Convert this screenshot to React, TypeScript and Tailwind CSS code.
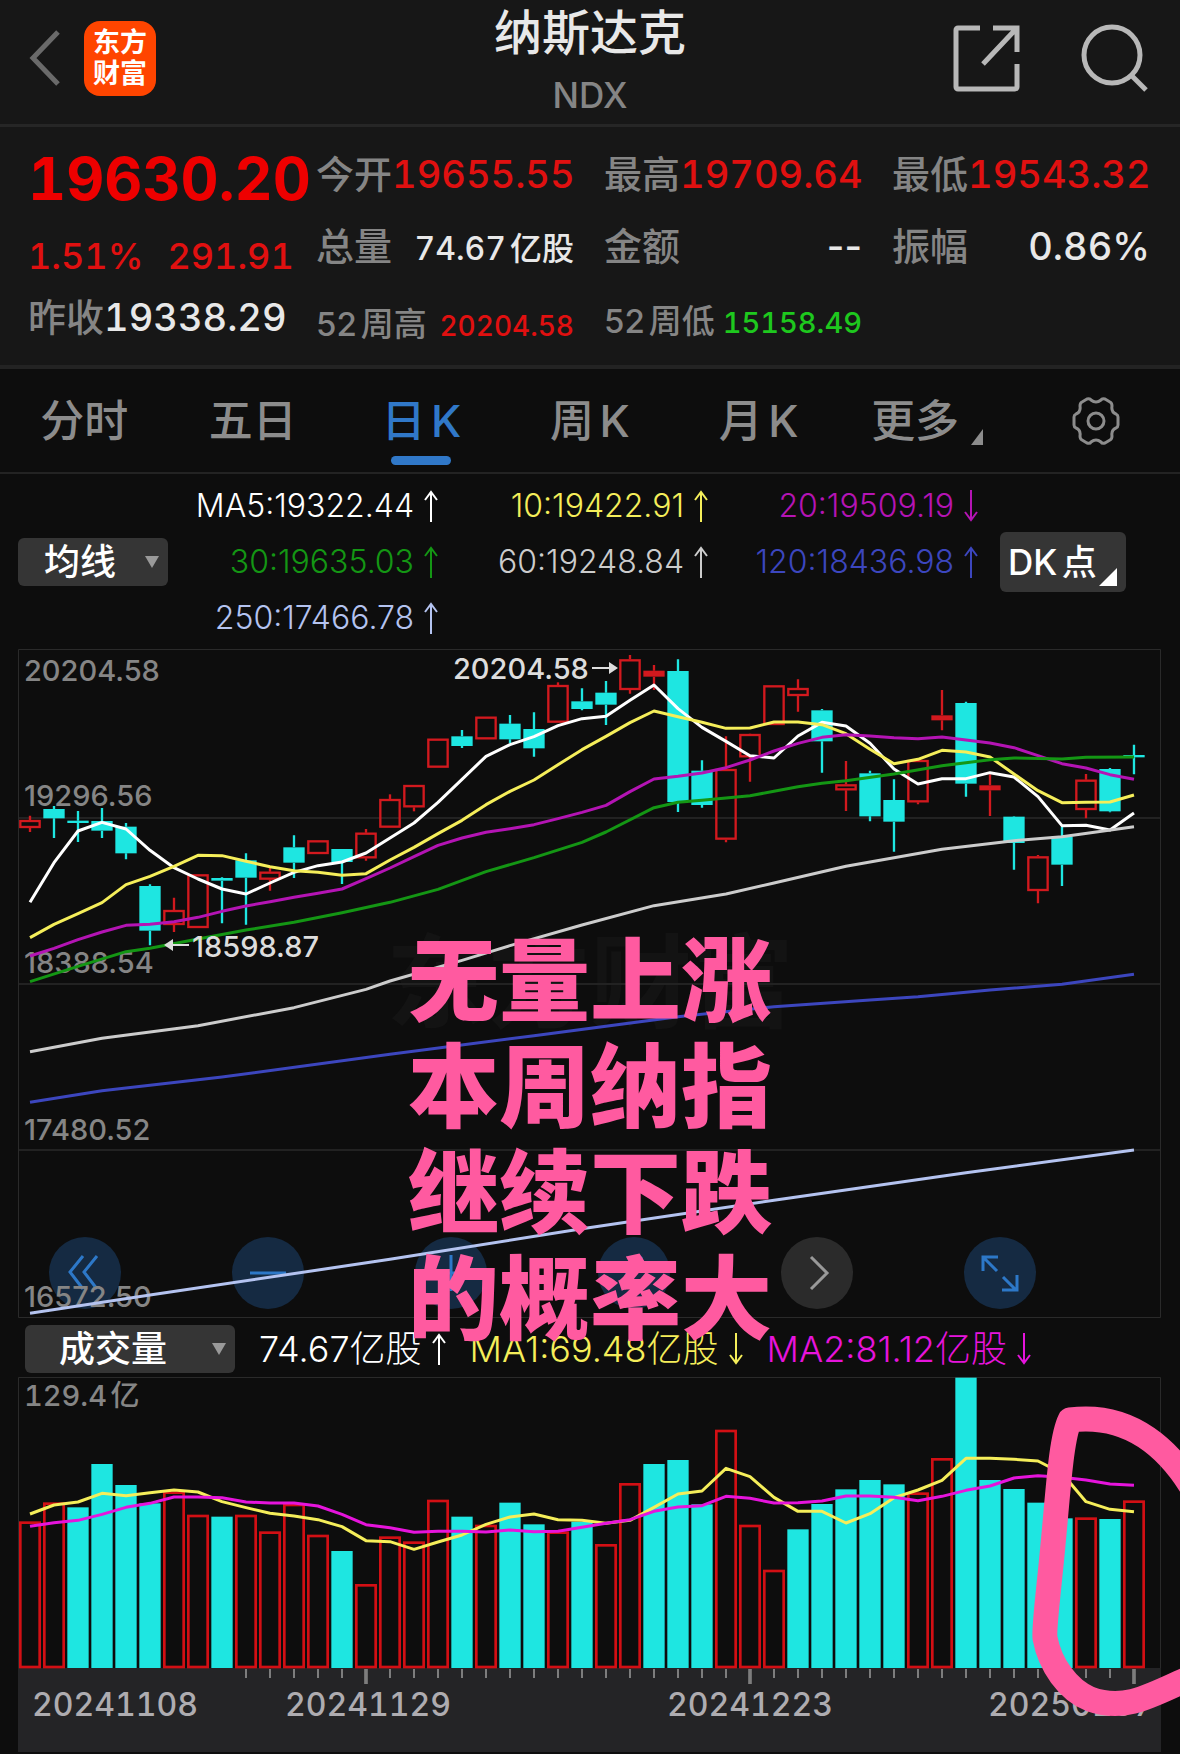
import React from "react"
import clsx from "clsx"

// Chart data is kept in thirds of a pixel, one entry per trading day
const PITCH = 72
const FIRST = 90

type Candle = [high: number, top: number, bottom: number, low: number, kind: "up" | "down" | "flat"]

const candles: Candle[] = [
    [527, 540, 564, 576, "up"], [498, 507, 535, 594, "down"], [513, 542, 549, 606, "down"], [504, 543, 572, 594, "down"],
    [549, 560, 640, 658, "down"], [733, 738, 872, 916, "down"], [773, 810, 855, 876, "up"], [703, 703, 864, 864, "up"],
    [712, 714, 722, 850, "down"], [640, 661, 713, 854, "down"], [684, 695, 719, 752, "up"], [586, 622, 668, 714, "down"],
    [601, 601, 642, 642, "up"], [627, 627, 666, 732, "down"], [567, 578, 655, 662, "up"], [463, 477, 563, 563, "up"],
    [435, 435, 502, 514, "up"], [296, 296, 383, 383, "up"], [270, 289, 318, 324, "down"], [230, 230, 298, 298, "up"],
    [225, 251, 298, 310, "down"], [217, 267, 325, 350, "down"], [127, 135, 248, 248, "up"], [145, 184, 207, 211, "down"],
    [123, 158, 194, 255, "down"], [45, 58, 150, 161, "up"], [75, 92, 110, 150, "flat"], [58, 93, 486, 516, "down"],
    [361, 392, 495, 503, "down"], [289, 387, 599, 607, "up"], [281, 282, 352, 425, "up"], [136, 136, 255, 255, "up"],
    [118, 144, 168, 215, "up"], [207, 211, 304, 398, "down"], [363, 433, 451, 513, "up"], [392, 400, 529, 544, "down"],
    [418, 480, 545, 635, "down"], [358, 360, 487, 493, "up"], [150, 226, 241, 271, "flat"], [185, 189, 431, 470, "down"],
    [403, 436, 451, 528, "flat"], [529, 530, 609, 689, "down"], [645, 649, 753, 790, "up"], [560, 590, 674, 738, "down"],
    [402, 419, 510, 535, "up"], [384, 387, 514, 517, "down"], [314, 345, 352, 403, "down"],
]

const ma5 = [787, 668, 573, 547, 567, 631, 683, 717, 747, 762, 729, 697, 677, 666, 639, 594, 549, 487, 418, 349, 314, 290, 257, 236, 229, 181, 135, 206, 262, 304, 347, 354, 288, 247, 258, 310, 387, 432, 416, 416, 398, 411, 470, 557, 556, 570, 519]
const ma10 = [893, 853, 821, 788, 734, 709, 679, 646, 647, 664, 680, 692, 697, 706, 701, 660, 622, 581, 541, 494, 454, 420, 374, 329, 289, 248, 213, 230, 247, 265, 264, 246, 246, 254, 281, 328, 371, 358, 331, 336, 351, 402, 452, 488, 487, 486, 465]
const ma20 = [948, 925, 899, 876, 856, 853, 845, 832, 814, 798, 785, 772, 760, 747, 716, 684, 650, 616, 594, 577, 566, 554, 536, 517, 496, 455, 417, 409, 399, 383, 360, 333, 310, 292, 284, 288, 293, 296, 291, 300, 309, 323, 347, 371, 384, 404, 418]

// The slow averages only need their bends: [day, y]
const ma30 = [[0, 1025], [2, 979], [4, 935], [5, 925], [7, 897], [9, 870], [11, 847], [13, 818], [15, 787], [17, 748], [19, 695], [21, 653], [23, 607], [24, 576], [26, 503], [27, 487], [28, 481], [29, 474], [30, 467], [31, 454], [32, 440], [33, 430], [34, 422], [36, 402], [38, 377], [39, 368], [40, 359], [41, 354], [43, 357], [44, 352], [46, 351]]
const ma60 = [[0, 1235], [3, 1195], [7, 1157], [11, 1103], [14, 1048], [15, 1023], [18, 961], [20, 917], [23, 855], [26, 797], [29, 762], [31, 729], [34, 679], [38, 628], [41, 602], [43, 590], [46, 560]]
const ma120 = [[0, 1387], [3, 1352], [8, 1311], [15, 1243], [21, 1187], [27, 1130], [31, 1100], [35, 1080], [37, 1070], [40, 1050], [43, 1033], [46, 1003]]
const ma250 = [[0, 2020], [5, 1965], [15, 1858], [23, 1766], [31, 1681], [39, 1598], [46, 1530]]

const volumeTops = [455, 398, 412, 282, 345, 400, 365, 435, 440, 435, 485, 402, 495, 543, 643, 500, 515, 390, 440, 465, 398, 463, 485, 455, 523, 340, 282, 270, 403, 180, 465, 600, 478, 402, 358, 330, 343, 368, 265, 23, 330, 357, 398, 445, 443, 447, 392]
const volumeDown = [2, 3, 4, 5, 8, 13, 18, 20, 21, 23, 26, 27, 28, 32, 33, 34, 35, 36, 39, 40, 41, 42, 43, 45]
const volumeMa1 = [432, 405, 396, 370, 377, 368, 360, 366, 395, 413, 430, 438, 449, 470, 512, 515, 538, 516, 495, 463, 441, 432, 449, 451, 460, 451, 412, 372, 363, 295, 320, 382, 424, 424, 459, 431, 383, 360, 331, 265, 265, 268, 273, 310, 395, 418, 425]
const volumeMa2 = [469, 458, 451, 433, 412, 400, 381, 381, 383, 396, 399, 399, 408, 433, 464, 473, 487, 484, 484, 486, 480, 485, 484, 472, 460, 449, 424, 411, 407, 379, 385, 399, 398, 393, 378, 378, 382, 392, 379, 361, 348, 324, 317, 322, 330, 342, 346]

const cx = (day: number) => FIRST + day * PITCH
const daily = (ys: number[]) => ys.map((y, i) => `${cx(i)},${y}`).join(" ")
const sparse = (ps: number[][]) => ps.map(([i, y]) => `${cx(i)},${y}`).join(" ")

const Line = ({ points, color }: { points: string; color: string }) => (
    <polyline points={points} fill="none" stroke={color} strokeWidth={9} strokeLinejoin="round" />
)

const Arrow = ({ down = false }: { down?: boolean }) => (
    <svg viewBox="0 0 14 32" className={clsx("h-8 w-[14px] shrink-0", down && "rotate-180")} fill="none" stroke="currentColor" strokeWidth={2}>
        <path d="M7 32V2M1 10l6-8 6 8" />
    </svg>
)

const Average = ({ text, color, down }: { text: string; color: string; down?: boolean }) => (
    <div className={clsx("flex items-center justify-end gap-[10px]", color)}>
        <span>{text}</span>
        <Arrow down={down} />
    </div>
)

const Field = ({ label, value, small = false, labelSize = "text-[38px]", size = "text-[38px]", color = "text-[#e8e8e8]" }: {
    label: string
    value: string
    small?: boolean
    labelSize?: string
    size?: string
    color?: string
}) => (
    <div className={clsx("flex items-baseline justify-between font-medium whitespace-nowrap", small ? "leading-[78px]" : "leading-[72px]")}>
        <dt className={clsx("text-[#858585]", labelSize)}>{label}</dt>
        <dd className={clsx(value !== "--" && "tabular-nums", size, color)}>{value}</dd>
    </div>
)

const Picker = ({ label, options, className }: { label: string; options: string[]; className: string }) => (
    <div className="relative shrink-0">
        <select aria-label={label} className={clsx("h-12 appearance-none rounded-md bg-[#353535] text-4xl font-medium text-white", className)}>
            {options.map((o) => <option key={o}>{o}</option>)}
        </select>
        <svg viewBox="0 0 14 12" className="pointer-events-none absolute top-[18px] right-[9px] h-3 w-[14px]" fill="#999">
            <path d="M0 0h14L7 12z" />
        </svg>
    </div>
)

const tabs = ["分时", "五日", "日K", "周K", "月K", "更多"]

const controls = [
    { name: "最早", d: "M34 19 21 35l13 17M48 19 35 35l13 17" },
    { name: "缩小", d: "M18 36h36" },
    { name: "放大", d: "M18 36h36M36 18v36" },
    { name: "向前", d: "M44 20 29 36l15 16" },
    { name: "向后", d: "M30 20l16 16-16 16", off: true },
    { name: "全屏", d: "M19 34V20h15M20 21l13 13M39 40l13 13M53 38v15H38" },
]

const priceLabels = [
    { text: "20204.58", y: 681 },
    { text: "19296.56", y: 806 },
    { text: "18388.54", y: 973 },
    { text: "17480.52", y: 1140 },
    { text: "16572.50", y: 1307 },
]

const App = () => {
    return (
        <div className="overflow-x-hidden bg-[#0d0d0d] font-['Inter','Noto_Sans_CJK_SC',sans-serif] [text-autospace:normal]">
            <header className="grid grid-cols-[1fr_auto_1fr] items-center border-b-[3px] border-[#262626] bg-[#171717]">
                <div className="flex items-center gap-6 pb-2 pl-7">
                    <button aria-label="返回">
                        <svg viewBox="0 0 32 56" className="h-14 w-8" fill="none" stroke="#6a6a6a" strokeWidth={5}>
                            <path d="M30 2 5 28l25 26" />
                        </svg>
                    </button>
                    <div className="flex h-[75px] w-[72px] flex-col items-center justify-center rounded-2xl bg-[#ff4500] text-[27px] leading-[31px] font-bold text-white">
                        <span>东方</span>
                        <span>财富</span>
                    </div>
                </div>
                <div className="text-center font-medium">
                    <h1 className="text-5xl leading-[66px] text-[#e8e8e8]">纳斯达克</h1>
                    <p className="text-[35px] leading-[58px] text-[#858585]">NDX</p>
                </div>
                <div className="flex items-center justify-end gap-15 pr-8 pb-2">
                    <button aria-label="分享">
                        <svg viewBox="0 0 68 68" className="size-[68px]" fill="none" stroke="#b8b8b8" strokeWidth={5}>
                            <path d="M28 4H6a2 2 0 0 0-2 2v57a2 2 0 0 0 2 2h57a2 2 0 0 0 2-2V40M41 4h24v24M64 5 31 40" />
                        </svg>
                    </button>
                    <button aria-label="搜索">
                        <svg viewBox="0 0 68 68" className="size-[68px]" fill="none" stroke="#b8b8b8" strokeWidth={5}>
                            <circle cx={32} cy={31} r={28} />
                            <path d="m51 51 15 15" />
                        </svg>
                    </button>
                </div>
            </header>

            <section className="grid grid-cols-4 gap-[30px] border-b-4 border-[#232323] bg-[#171717] pt-[11px] pr-[30px] pl-7 whitespace-nowrap">
                <div className="font-medium tabular-nums">
                    <p className="text-[59px] leading-[82px] font-bold text-[#ee0000]">19630.20</p>
                    <p className="flex gap-6 text-4xl leading-[72px] text-[#e01010]">
                        <span>1.51%</span>
                        <span>291.91</span>
                    </p>
                    <p className="flex text-[38px] leading-[50px]">
                        <span className="text-[#858585]">昨收</span>
                        <span className="text-[#e8e8e8]">19338.29</span>
                    </p>
                </div>
                <dl>
                    <Field label="今开" value="19655.55" color="text-[#e01010]" />
                    <Field label="总量" value="74.67亿股" size="text-[32px]" />
                    <Field label="52周高" value="20204.58" small labelSize="text-[33px]" size="text-[28px]" color="text-[#e01010]" />
                </dl>
                <dl>
                    <Field label="最高" value="19709.64" color="text-[#e01010]" />
                    <Field label="金额" value="--" />
                    <Field label="52周低" value="15158.49" small labelSize="text-[33px]" size="text-[29px]" color="text-[#1ec81e]" />
                </dl>
                <dl>
                    <Field label="最低" value="19543.32" color="text-[#e01010]" />
                    <Field label="振幅" value="0.86%" />
                </dl>
            </section>

            <nav className="grid h-[105px] grid-cols-7 border-b-2 border-[#232323] text-[44px] font-medium">
                {tabs.map((tab) => (
                    <button key={tab} className={clsx("relative flex items-center justify-center", tab === "日K" ? "text-[#3078c8]" : "text-[#8c8c8c]")}>
                        {tab}
                        {tab === "日K" && <span className="absolute bottom-[7px] h-[9px] w-15 rounded-full bg-[#3078c8]" />}
                        {tab === "更多" && (
                            <svg viewBox="0 0 12 16" className="mt-8 ml-3 h-4 w-3" fill="currentColor">
                                <path d="M12 0v16H0z" />
                            </svg>
                        )}
                    </button>
                ))}
                <button aria-label="设置" className="flex items-center justify-center">
                    <svg viewBox="0 0 48 48" className="size-12" fill="none" stroke="#8c8c8c" strokeWidth={3} strokeLinejoin="round">
                        <path d="M15 2 Q18 1 19 3 Q24 7 29 3 Q30 1 33 2 L38 5 Q40 6 40 9 Q39 15 44 17 Q46 18 46 20 V28 Q46 30 44 31 Q39 33 40 39 Q40 42 38 43 L33 46 Q30 47 29 45 Q24 41 19 45 Q18 47 15 46 L10 43 Q8 42 8 39 Q9 33 4 31 Q2 30 2 28 V20 Q2 18 4 17 Q9 15 8 9 Q8 6 10 5 Z" />
                        <circle cx={24} cy={24} r={8} />
                    </svg>
                </button>
            </nav>

            <section className="flex items-center pt-1 pb-[3px] pl-[18px]">
                <Picker label="均线指标" options={["均线", "BOLL"]} className="w-[150px] pl-[26px]" />
                <div className="grid w-[810px] shrink-0 grid-cols-3 text-[32px] leading-14 font-light">
                    <Average text="MA5:19322.44" color="text-white" />
                    <Average text="10:19422.91" color="text-[#f5ee5a]" />
                    <Average text="20:19509.19" color="text-[#b414b4]" down />
                    <Average text="30:19635.03" color="text-[#149614]" />
                    <Average text="60:19248.84" color="text-[#cccccc]" />
                    <Average text="120:18436.98" color="text-[#3c46be]" />
                    <Average text="250:17466.78" color="text-[#b4c3f0]" />
                </div>
                <button className="relative ml-[22px] flex h-15 w-[126px] items-center rounded-md bg-[#353535] pl-2 text-[35px] font-medium text-white">
                    DK点
                    <svg viewBox="0 0 18 18" className="absolute right-[9px] bottom-[6px] size-[18px]" fill="currentColor">
                        <path d="M18 0v18H0z" />
                    </svg>
                </button>
            </section>

            <section className="relative">
                <div className="absolute right-[144px] bottom-[9px] left-[49px] flex justify-between">
                    {controls.map((c) => (
                        <button key={c.name} aria-label={c.name} className={clsx("size-18 rounded-full", c.off ? "bg-[#2b2b2b] text-[#999999]" : "bg-[#152a42] text-[#2d78c8]")}>
                            <svg viewBox="0 0 72 72" fill="none" stroke="currentColor" strokeWidth={3}>
                                <path d={c.d} />
                            </svg>
                        </button>
                    ))}
                </div>
                <svg viewBox="0 649 1180 669" className="pointer-events-none relative block w-full">
                    <text x={590} y={1020} textAnchor="middle" fontSize={102} fontWeight={700} fill="#131313">东方财富</text>
                    <path d="M18 818h1142M18 984h1142M18 1150h1142" stroke="#222222" strokeWidth={2} />
                    <path d="M18.5 649.5h1142v668h-1142z" fill="none" stroke="#2a2a2a" />
                    <g fill="#858585" fontSize={29} fontWeight={500}>
                        {priceLabels.map((l) => <text key={l.text} x={24} y={l.y}>{l.text}</text>)}
                    </g>
                    <g transform="translate(0 640) scale(0.33333)">
                        {candles.map(([high, top, bottom, low, kind], i) => {
                            const color = kind === "down" ? "#1ee6e1" : "#d2191e"
                            return (
                                <g key={i} stroke={color} strokeWidth={7}>
                                    <path d={`M${cx(i)} ${high}V${top}M${cx(i)} ${bottom}V${low}`} />
                                    {kind === "up"
                                        ? <rect x={cx(i) - 29} y={top + 3} width={58} height={bottom - top - 6} fill="none" />
                                        : <rect x={cx(i) - 32} y={top} width={64} height={bottom - top} fill={color} stroke="none" />}
                                </g>
                            )
                        })}
                        <Line points={daily(ma5)} color="#ffffff" />
                        <Line points={daily(ma10)} color="#f5ee5a" />
                        <Line points={daily(ma20)} color="#b414b4" />
                        <Line points={sparse(ma30)} color="#149614" />
                        <Line points={sparse(ma60)} color="#cccccc" />
                        <Line points={sparse(ma120)} color="#3c46be" />
                        <Line points={sparse(ma250)} color="#b4c3f0" />
                    </g>
                    <g fill="#dddddd" fontSize={29} fontWeight={500}>
                        <text x={192} y={957}>18598.87</text>
                        <text x={453} y={679}>20204.58</text>
                        <path d="M164 945l9-6v5h16v2h-16v5zM618 668l-9-6v5h-17v2h17v5z" />
                    </g>
                </svg>
                <p className="pointer-events-none absolute inset-x-0 top-[279px] z-10 text-center text-[91px] leading-[106px] font-black text-[#ff5aa0]">
                    无量上涨<br />本周纳指<br />继续下跌<br />的概率大
                </p>
            </section>

            <section className="flex h-[59px] items-center pt-[2px] pl-[25px] text-4xl font-light whitespace-nowrap">
                <Picker label="副图指标" options={["成交量", "MACD"]} className="w-[210px] pl-[34px]" />
                <div className="ml-6 flex gap-6 [text-autospace:no-autospace]">
                    <Average text="74.67亿股" color="text-white" />
                    <Average text="MA1:69.48亿股" color="text-[#f5ee5a]" down />
                    <Average text="MA2:81.12亿股" color="text-[#e614dc]" down />
                </div>
            </section>

            <section>
                <svg viewBox="0 1377 1180 377" className="block w-full">
                    <path d="M18 1668h1143v84H18z" fill="#242426" />
                    <path d="M18.5 1668V1377.5h1142V1668" fill="none" stroke="#2a2a2a" />
                    <text className="tabular-nums" x={24} y={1406} fill="#858585" fontSize={29} fontWeight={500}>129.4亿</text>
                    <g transform="translate(0 1370) scale(0.33333)">
                        {volumeTops.map((top, i) => volumeDown.includes(i)
                            ? <rect key={i} x={cx(i) - 32} y={top} width={64} height={894 - top} fill="#1ee6e1" />
                            : <rect key={i} x={cx(i) - 29} y={top + 3} width={58} height={888 - top} fill="none" stroke="#d20f14" strokeWidth={8} />)}
                        {volumeTops.map((_, i) => i > 8 && (
                            <path key={i} d={i % 16 === 14 ? `M${cx(i)} 897v45` : `M${cx(i)} 897v27`} stroke="#7d7d7d" strokeWidth={i % 16 === 14 ? 11 : 6} />
                        ))}
                        <Line points={daily(volumeMa1)} color="#f5ee5a" />
                        <Line points={daily(volumeMa2)} color="#e614dc" />
                    </g>
                    <g className="tabular-nums" fill="#aeacb0" fontSize={32} fontWeight={500}>
                        <text x={32} y={1716}>20241108</text>
                        <text x={285} y={1716}>20241129</text>
                        <text x={667} y={1716}>20241223</text>
                        <text x={988} y={1716}>20250107</text>
                    </g>
                    <path
                        d="M1196 1494C1172 1452 1132 1412 1070 1420C1060 1440 1058 1500 1050 1575C1046 1615 1044 1630 1045 1638C1050 1665 1068 1690 1090 1699C1125 1712 1150 1696 1196 1675"
                        fill="none"
                        stroke="#ff5aa0"
                        strokeWidth={25}
                        strokeLinejoin="round"
                    />
                </svg>
            </section>
        </div>
    )
}

export default App
